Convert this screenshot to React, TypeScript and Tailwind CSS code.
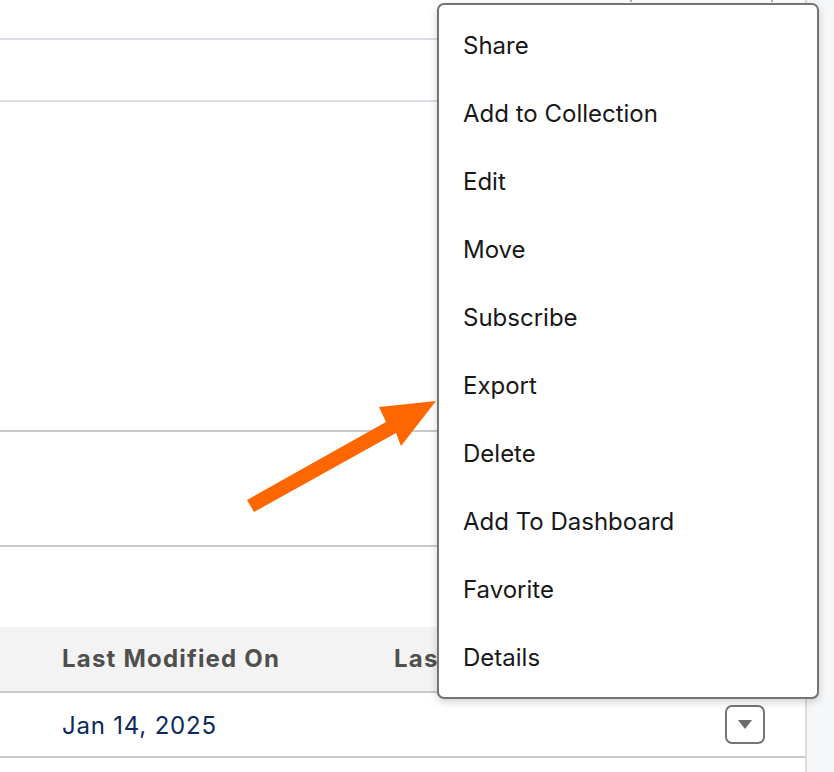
import React from 'react';

const menuItems = [
  'Share',
  'Add to Collection',
  'Edit',
  'Move',
  'Subscribe',
  'Export',
  'Delete',
  'Add To Dashboard',
  'Favorite',
  'Details',
];

const ActionMenu: React.FC = () => (
  <div className="absolute left-[437px] top-[3px] w-[382px] rounded-[7px] border-2 border-[#747474] bg-white pt-[7px] pb-[5px] shadow-[0_3px_8px_rgba(0,0,0,0.18)]">
    {menuItems.map((item) => (
      <div key={item} className="flex h-[68px] items-center pl-[24px] text-[24px] text-[#181818]">
        {item}
      </div>
    ))}
  </div>
);

const Arrow: React.FC = () => (
  <svg className="pointer-events-none absolute left-0 top-0" width="834" height="772" viewBox="0 0 834 772">
    <polygon
      points="247,500 386,422 379,407 436,401 401,446 396,433 254,512"
      fill="#ff6600"
    />
  </svg>
);

export default function App() {
  return (
    <div
      className="relative flex h-[772px] w-[834px] overflow-hidden bg-white"
      style={{ fontFamily: 'Inter, "Noto Sans", sans-serif' }}
    >
      {/* main list area */}
      <div className="flex flex-1 flex-col">
        <div className="h-[40px] border-b-2 border-[#d8dde6]" />
        <div className="h-[62px] border-b-2 border-[#d8dde6]" />
        <div className="h-[330px] border-b-2 border-[#c9c9c9]" />
        <div className="h-[115px] border-b-2 border-[#c9c9c9]" />
        <div className="h-[80px]" />

        {/* table header */}
        <div className="flex h-[66px] items-center border-b-2 border-[#c9c9c9] bg-[#f3f3f3] text-[24px] font-bold tracking-[1.2px] text-[#514f4d]">
          <div className="w-[394px] shrink-0 pl-[62px]">Last Modified On</div>
          <div className="flex-1 whitespace-nowrap">Last Modified By</div>
        </div>

        {/* table row */}
        <div className="flex h-[65px] items-center border-b-2 border-[#c9c9c9]">
          <div className="w-[394px] shrink-0 pl-[62px] pt-[3px] text-[24px] tracking-[0.8px] text-[#0b2a5b]">Jan 14, 2025</div>
          <div className="flex flex-1 justify-end pr-[40px]">
            <button className="flex h-[39px] w-[40px] items-center justify-center rounded-[7px] border-2 border-[#747474] bg-white">
              <svg width="14" height="9" viewBox="0 0 14 9">
                <polygon points="0,0 14,0 7,9" fill="#6b6b6b" />
              </svg>
            </button>
          </div>
        </div>
        <div className="flex-1" />
      </div>

      {/* right scroll strip */}
      <div className="w-[29px] border-l-2 border-[#dddddd] bg-[#f6f7f9]" />

      {/* column separators peeking above the menu */}
      <div className="absolute left-[630px] top-0 h-[2px] w-[2px] bg-[#b0b0b0]" />
      <div className="absolute left-[771px] top-0 h-[2px] w-[2px] bg-[#b0b0b0]" />

      <ActionMenu />
      <Arrow />
    </div>
  );
}
